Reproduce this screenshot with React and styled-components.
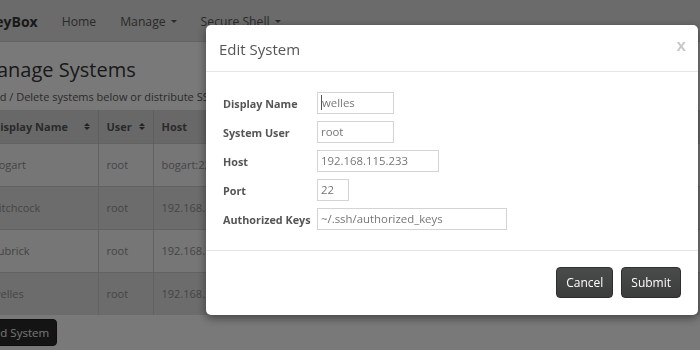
import React from 'react';
import styled, { createGlobalStyle } from 'styled-components';

const GlobalStyle = createGlobalStyle`
  html, body {
    margin: 0;
    padding: 0;
    width: 700px;
    height: 350px;
    overflow: hidden;
    background: #f2f2f2;
    font-family: "Open Sans", "Liberation Sans", sans-serif;
    color: #333;
  }
`;

const Page = styled.div`
  width: 760px;
`;

const Navbar = styled.div`
  display: flex;
  align-items: center;
  box-sizing: border-box;
  height: 42px;
  padding-top: 2px;
  background: #d6d6d6;
  border-bottom: 1px solid #c8c8c8;
`;

const Brand = styled.div`
  margin-left: -14px;
  font-size: 14px;
  font-weight: 700;
  color: #333;
  padding-right: 12px;
`;

const NavLink = styled.div`
  font-size: 12.2px;
  color: #555;
  padding: 0 12px;
  display: flex;
  align-items: center;
  gap: 5px;
`;

const Caret = styled.span`
  width: 0;
  height: 0;
  border-left: 3.5px solid transparent;
  border-right: 3.5px solid transparent;
  border-top: 3.5px solid #555;
`;

const Content = styled.div`
  margin-left: -16px;
`;

const Heading = styled.h2`
  margin: 14px 0 0 -5px;
  font-size: 20px;
  font-weight: 400;
  color: #333;
  line-height: 28px;
`;

const Lead = styled.p`
  margin: 5px 0 5px 2px;
  font-size: 11px;
  color: #555;
  line-height: 16px;
`;

const Table = styled.table`
  border-collapse: collapse;
  width: 720px;
  font-size: 11px;
`;

const Th = styled.th`
  text-align: left;
  font-weight: 700;
  color: #555;
  background: #d0d0d0;
  height: 33px;
  padding: 0 8px;
  border-right: 1px solid #bdbdbd;
  white-space: nowrap;
  width: ${p => p.w || 'auto'};
  box-sizing: border-box;
`;

const ThInner = styled.div`
  display: flex;
  align-items: center;
  justify-content: space-between;
`;

const SortIcon = styled.span`
  display: inline-flex;
  flex-direction: column;
  gap: 1px;
  &::before, &::after {
    content: '';
    width: 0;
    height: 0;
    border-left: 3px solid transparent;
    border-right: 3px solid transparent;
  }
  &::before { border-bottom: 3px solid #444; }
  &::after { border-top: 3px solid #444; }
`;

const Tr = styled.tr`
  background: ${p => (p.odd ? '#ececec' : '#d8d8d8')};
`;

const Td = styled.td`
  height: 42px;
  padding: 0 8px;
  color: #8a8a8a;
  border-right: 1px solid #c4c4c4;
  border-top: 1px solid #c4c4c4;
  white-space: nowrap;
`;

const AddButton = styled.button`
  margin: 4px 0 0 -6px;
  height: 27px;
  padding: 0 7px;
  background: #282828;
  color: #e8e8e8;
  border: 1px solid #1c1c1c;
  border-radius: 4px;
  font-family: inherit;
  font-size: 11.5px;
`;

const Backdrop = styled.div`
  position: fixed;
  inset: 0;
  background: rgba(0, 0, 0, 0.5);
`;

const Modal = styled.div`
  position: fixed;
  left: 206px;
  top: 25px;
  width: 492px;
  background: #fff;
  border-radius: 5px;
  box-shadow: 0 3px 10px rgba(0, 0, 0, 0.45);
`;

const ModalHeader = styled.div`
  display: flex;
  align-items: center;
  justify-content: space-between;
  height: 46px;
  padding: 0 12px 0 13px;
  border-bottom: 1px solid #e5e5e5;
`;

const Title = styled.div`
  font-size: 15px;
  color: #555;
  padding-top: 1px;
`;

const Close = styled.div`
  font-family: "Liberation Sans", sans-serif;
  font-size: 17px;
  font-weight: 700;
  color: #c8c8c8;
  margin-top: -5px;
`;

const ModalBody = styled.div`
  display: flex;
  flex-direction: column;
  gap: 7px;
  padding: 20px 17px 20px;
  border-bottom: 1px solid #e5e5e5;
`;

const Row = styled.div`
  display: flex;
  align-items: center;
`;

const Label = styled.div`
  width: 94px;
  font-size: 10.8px;
  font-weight: 700;
  color: #555;
  white-space: nowrap;
`;

const Input = styled.div`
  box-sizing: border-box;
  width: ${p => p.w}px;
  height: 22px;
  border: 1px solid #d4d4d4;
  padding: 0 3px;
  font-size: 11.4px;
  line-height: 20px;
  color: #777;
  white-space: nowrap;
`;

const Cursor = styled.span`
  border-left: 1px solid #555;
`;

const ModalFooter = styled.div`
  display: flex;
  justify-content: flex-end;
  gap: 8px;
  padding: 16px 17px 17px;
`;

const Button = styled.button`
  height: 31px;
  padding: 0 ${p => p.px}px;
  background: linear-gradient(#4a4b4b, #3b3c3c);
  color: #fff;
  border: 1px solid #2e2e2e;
  border-radius: 4px;
  font-family: inherit;
  font-size: 12px;
`;

const rows = [
  { name: 'bogart', user: 'root', host: 'bogart:22' },
  { name: 'hitchcock', user: 'root', host: '192.168.115.231:22' },
  { name: 'kubrick', user: 'root', host: '192.168.115.232:22' },
  { name: 'welles', user: 'root', host: '192.168.115.233:22' },
];

const fields = [
  { label: 'Display Name', value: 'welles', w: 77, cursor: true },
  { label: 'System User', value: 'root', w: 77 },
  { label: 'Host', value: '192.168.115.233', w: 122 },
  { label: 'Port', value: '22', w: 32 },
  { label: 'Authorized Keys', value: '~/.ssh/authorized_keys', w: 190 },
];

const App = () => (
  <>
    <GlobalStyle />
    <Page>
      <Navbar>
        <Brand>KeyBox</Brand>
        <NavLink>Home</NavLink>
        <NavLink>Manage <Caret /></NavLink>
        <NavLink>Secure Shell <Caret /></NavLink>
      </Navbar>
      <Content>
        <Heading>Manage Systems</Heading>
        <Lead>Add / Delete systems below or distribute SSH keys to selected systems</Lead>
        <Table>
          <thead>
            <tr>
              <Th w="114px"><ThInner>Display Name <SortIcon /></ThInner></Th>
              <Th w="55px"><ThInner>User <SortIcon /></ThInner></Th>
              <Th>Host</Th>
            </tr>
          </thead>
          <tbody>
            {rows.map((r, i) => (
              <Tr key={r.name} odd={i % 2 === 0}>
                <Td>{r.name}</Td>
                <Td>{r.user}</Td>
                <Td>{r.host}</Td>
              </Tr>
            ))}
          </tbody>
        </Table>
        <AddButton>Add System</AddButton>
      </Content>
    </Page>
    <Backdrop />
    <Modal>
      <ModalHeader>
        <Title>Edit System</Title>
        <Close>x</Close>
      </ModalHeader>
      <ModalBody>
        {fields.map(f => (
          <Row key={f.label}>
            <Label>{f.label}</Label>
            <Input w={f.w}>{f.cursor && <Cursor />}{f.value}</Input>
          </Row>
        ))}
      </ModalBody>
      <ModalFooter>
        <Button px={9}>Cancel</Button>
        <Button px={9}>Submit</Button>
      </ModalFooter>
    </Modal>
  </>
);

export default App;
